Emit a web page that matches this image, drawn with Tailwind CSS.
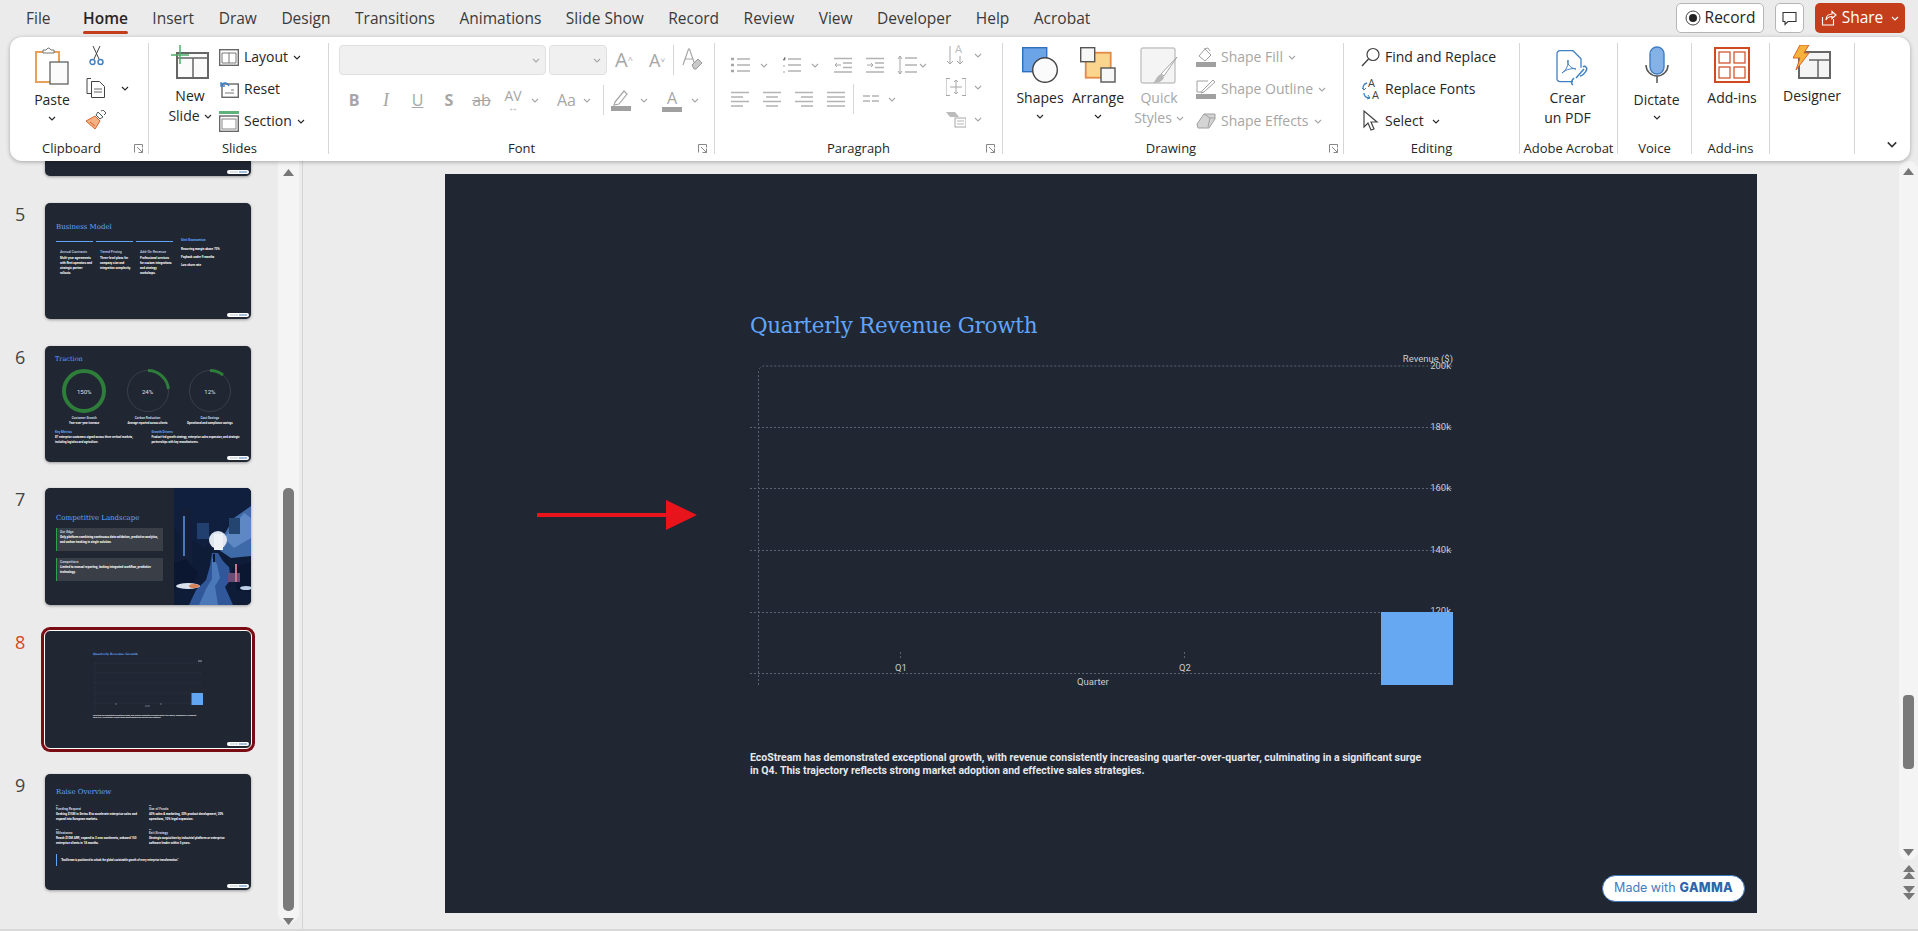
<!DOCTYPE html>
<html lang="en">
<head>
<meta charset="UTF-8">
<title>Quarterly Revenue Growth - PowerPoint</title>
<script src="https://cdn.jsdelivr.net/npm/@tailwindcss/browser@4"></script>
</head>
<body class="bg-[#ebebeb] font-['Open_Sans',sans-serif] text-[#262626]">
<svg class="hidden">
  <symbol id="chev" viewBox="0 0 8 5"><path d="M1 1l3 3 3-3" fill="none" stroke="currentColor" stroke-width="1.1"/></symbol>
  <symbol id="launch" viewBox="0 0 10 9"><path d="M.5 8.5v-8h8v3M.5.5M3 3l5.500 5.500M8.500 4.500v4h-4" fill="none" stroke="#888" stroke-width="1"/></symbol>
  <symbol id="aleft" viewBox="0 0 18 16"><path d="M0 1.500h18M0 6h12M0 10.500h18M0 15h12" stroke="#b3b3b3" stroke-width="1.500"/></symbol>
  <symbol id="acenter" viewBox="0 0 18 16"><path d="M0 1.500h18M3 6h12M0 10.500h18M3 15h12" stroke="#b3b3b3" stroke-width="1.500"/></symbol>
  <symbol id="aright" viewBox="0 0 18 16"><path d="M0 1.500h18M6 6h12M0 10.500h18M6 15h12" stroke="#b3b3b3" stroke-width="1.500"/></symbol>
  <symbol id="ajust" viewBox="0 0 18 16"><path d="M0 1.500h18M0 6h18M0 10.500h18M0 15h18" stroke="#b3b3b3" stroke-width="1.500"/></symbol>
  <symbol id="minibadge" viewBox="0 0 22 4"><rect width="22" height="4" rx="2" fill="#fff"/><rect x="12" y="1" width="8" height="2" fill="#a9c0dc"/><rect x="3" y="1.300" width="8" height="1.400" fill="#cfd6df"/></symbol>
</svg>

<div class="w-[1918px] h-[931px] overflow-hidden relative">

  <!-- tabs -->
  <header class="h-[37px] flex items-start">
    <nav class="flex pl-[26px] pt-[6px] gap-[24.500px] text-[15.500px] leading-[24px] text-[#3a3a3a]">
      <span>File</span>
      <span class="relative font-semibold text-[#262626] ml-[8px]">Home<span class="absolute left-0 right-0 top-[25px] h-[3px] rounded-sm bg-[#c43e1c]"></span></span>
      <span>Insert</span><span>Draw</span><span>Design</span><span>Transitions</span><span>Animations</span><span>Slide Show</span><span>Record</span><span>Review</span><span>View</span><span>Developer</span><span>Help</span><span>Acrobat</span>
    </nav>
    <div class="ml-auto flex items-center gap-[11px] pr-[13px] pt-[3px]">
      <button class="h-[30px] w-[88px] flex items-center justify-center gap-[4px] bg-white border border-[#b5b5b5] rounded-[5px] text-[15.500px]">
        <svg class="w-[16px] h-[16px]" viewBox="0 0 16 16"><circle cx="8" cy="8" r="7" fill="none" stroke="#444" stroke-width="1"/><circle cx="8" cy="8" r="4" fill="#222"/></svg>Record
      </button>
      <button class="h-[30px] w-[29px] flex items-center justify-center bg-white border border-[#b5b5b5] rounded-[5px]">
        <svg class="w-[15px] h-[15px]" viewBox="0 0 15 15"><path d="M1 1.500h13v9H6l-3 3v-3H1z" fill="none" stroke="#333" stroke-width="1.100"/></svg>
      </button>
      <button class="h-[30px] w-[90px] flex items-center justify-center gap-[5px] bg-[#c43e1c] rounded-[5px] text-white text-[15.500px]">
        <svg class="w-[16px] h-[16px]" viewBox="0 0 16 16"><path d="M1.500 7v8h11V9M5 10c0-4 3-6 6-6V1.500L15 5l-4 3.500V6.500C8.500 6.500 6 8 5 10z" fill="none" stroke="#fff" stroke-width="1.100"/></svg>Share
        <svg class="w-[8px] h-[5px] text-white ml-[3px]"><use href="#chev"/></svg>
      </button>
    </div>
  </header>

  <!-- ribbon -->
  <section class="relative z-10 ml-[10px] w-[1900px] h-[124px] bg-white rounded-xl shadow-[0_1px_4px_rgba(0,0,0,0.3)] pt-[6px] flex text-[14px] leading-[20px]">

    <!-- clipboard -->
    <div class="relative w-[139px] h-[111px] border-r border-[#d6d6d6] flex flex-col">
      <div class="flex h-[99px]">
        <div class="w-[52px] ml-[16px] flex flex-col items-center">
          <svg class="w-[34px] h-[38px] mt-[4px] shrink-0" viewBox="0 0 34 38"><rect x="1" y="5" width="23" height="30" fill="#fff" stroke="#e8a15a" stroke-width="2"/><path d="M8 5V3h3l2-2h1l2 2h3v3H8z" fill="#fff" stroke="#777"/><rect x="15" y="15" width="18" height="22" fill="#fbfbfb" stroke="#555" stroke-width="1.200"/></svg>
          <span class="mt-[5px]">Paste</span>
          <svg class="w-[8px] h-[5px] mt-[6px]"><use href="#chev"/></svg>
        </div>
        <div class="flex flex-col ml-[8px]">
          <svg class="w-[15px] h-[20px] ml-[3px] mt-[3px]" viewBox="0 0 15 20"><path d="M4 0l6 13M11 0L5 13" stroke="#444" fill="none"/><circle cx="3.500" cy="16" r="2.500" fill="none" stroke="#3f7fc4" stroke-width="1.400"/><circle cx="11.500" cy="16" r="2.500" fill="none" stroke="#3f7fc4" stroke-width="1.400"/></svg>
          <div class="flex items-center mt-[12px]">
            <svg class="w-[20px] h-[20px]" viewBox="0 0 20 20"><path d="M5 .500H1v15h4M5.500 3.500h8l5 5v11h-13z" fill="none" stroke="#444"/><path d="M8 11h8M8 14h8" stroke="#666"/></svg>
            <svg class="w-[8px] h-[5px] ml-[15px]"><use href="#chev"/></svg>
          </div>
          <svg class="w-[20px] h-[20px] mt-[12px]" viewBox="0 0 20 20"><path d="M12 2l5 5-3 2-4-4z" fill="#fff" stroke="#555"/><path d="M15 1l2-1 3 3-2 2" fill="none" stroke="#555"/><path d="M9 6l5 5-5 8-9-8z" fill="#f4b183" stroke="#d9622b"/><path d="M4 12l5 4" stroke="#d9622b"/></svg>
        </div>
      </div>
      <span class="text-[13px] leading-[12px] pl-[32px]">Clipboard</span>
      <svg class="absolute right-[4px] bottom-[1px] w-[10px] h-[9px]"><use href="#launch"/></svg>
    </div>

    <!-- slides -->
    <div class="w-[180px] h-[111px] border-r border-[#d6d6d6] flex flex-col">
      <div class="flex h-[99px]">
        <div class="w-[60px] ml-[6px] flex flex-col items-center">
          <svg class="w-[38px] h-[34px] mt-[2px] ml-[10px] shrink-0" viewBox="0 0 38 34"><rect x="6" y="8" width="31" height="25" fill="#fbfbfb" stroke="#666" stroke-width="2"/><path d="M6 13h31M22 13v20" stroke="#666" stroke-width="1.500"/><path d="M9 0v19M0 10h18" stroke="#4caf6a" stroke-width="1.500"/></svg>
          <span class="mt-[7px] ml-[10px]">New</span>
          <span class="ml-[10px] whitespace-nowrap flex items-center gap-[4px]">Slide<svg class="w-[8px] h-[5px]"><use href="#chev"/></svg></span>
        </div>
        <div class="ml-[4px] flex flex-col gap-[12px] mt-[4px]">
          <div class="flex items-center gap-[5px] h-[20px]">
            <svg class="w-[20px] h-[17px]" viewBox="0 0 20 17"><rect x=".7" y=".7" width="18.600" height="15.600" fill="#fff" stroke="#666" stroke-width="1.400"/><path d="M3 4h14M10 4v10M3 14h14M3 4v10M17 4v10" stroke="#777" fill="none"/></svg>
            Layout<svg class="w-[8px] h-[5px]"><use href="#chev"/></svg>
          </div>
          <div class="flex items-center gap-[5px] h-[20px]">
            <svg class="w-[20px] h-[17px]" viewBox="0 0 20 17"><rect x="3" y="3" width="16.300" height="13.300" fill="#fff" stroke="#666" stroke-width="1.400"/><path d="M6 12h9M12 9h3" stroke="#777"/><path d="M2 5c2-4 6-4 8 0M2 1v4h4" fill="none" stroke="#3f7fc4" stroke-width="1.400"/></svg>
            Reset
          </div>
          <div class="flex items-center gap-[5px] h-[20px]">
            <svg class="w-[20px] h-[21px]" viewBox="0 0 20 21"><rect width="20" height="3" fill="#5fb37a"/><rect x=".7" y="5" width="18.600" height="15.300" fill="#fff" stroke="#666" stroke-width="1.400"/><rect x="3" y="8" width="14" height="10" fill="none" stroke="#888"/></svg>
            Section<svg class="w-[8px] h-[5px]"><use href="#chev"/></svg>
          </div>
        </div>
      </div>
      <span class="text-[13px] leading-[12px] text-center pr-[-1px] pl-[2px]">Slides</span>
    </div>

    <!-- font -->
    <div class="relative w-[386px] h-[111px] border-r border-[#d6d6d6] flex flex-col text-[#a6a6a6]">
      <div class="h-[99px]">
        <div class="flex items-center pl-[10px] mt-[2px] h-[30px]">
          <div class="w-[207px] h-[30px] bg-[#f0f0f0] border border-[#e0e0e0] rounded-[4px] flex items-center justify-end pr-[5px]"><svg class="w-[8px] h-[5px]"><use href="#chev"/></svg></div>
          <div class="w-[58px] h-[30px] ml-[3px] bg-[#f0f0f0] border border-[#e0e0e0] rounded-[4px] flex items-center justify-end pr-[5px]"><svg class="w-[8px] h-[5px]"><use href="#chev"/></svg></div>
          <span class="ml-[8px] w-[34px] text-[20px] leading-[24px]">A<sup class="text-[9px]">^</sup></span>
          <span class="w-[24px] text-[18px] leading-[24px]">A<sup class="text-[8px]">˅</sup></span>
          <span class="w-px h-[30px] bg-[#d6d6d6]"></span>
          <svg class="ml-[7px] w-[21px] h-[24px]" viewBox="0 0 21 24"><path d="M2 17L7.500 1h1L14 17M4 11h8" fill="none" stroke="#a6a6a6" stroke-width="1.200"/><path d="M11 17l6-6 4 4-6 6h-2z" fill="#c8c8c8" stroke="#999"/></svg>
        </div>
        <div class="flex items-center pl-[9px] mt-[10px] h-[30px] text-[16px]">
          <span class="w-[32px] text-center font-bold">B</span>
          <span class="w-[32px] text-center italic font-['Liberation_Serif',serif] text-[18px]">I</span>
          <span class="w-[31px] text-center underline">U</span>
          <span class="w-[32px] text-center font-bold">S</span>
          <span class="w-[33px] text-center line-through">ab</span>
          <span class="w-[30px] text-center leading-[14px] text-[14px]">AV<br><span class="text-[10px] leading-[8px] block">↔</span></span>
          <svg class="w-[8px] h-[5px] ml-[3px]"><use href="#chev"/></svg>
          <span class="w-[29px] ml-[13px] text-center">Aa</span>
          <svg class="w-[8px] h-[5px] ml-[2px]"><use href="#chev"/></svg>
          <span class="w-px h-[30px] bg-[#d6d6d6] ml-[12px]"></span>
          <svg class="ml-[7px] w-[20px] h-[24px]" viewBox="0 0 20 24"><path d="M4 14L13 3l3 3-8 10-5 1z" fill="none" stroke="#a6a6a6" stroke-width="1.200"/><rect y="18" width="20" height="5" fill="#a0a0a0"/></svg>
          <svg class="w-[8px] h-[5px] ml-[9px]"><use href="#chev"/></svg>
          <span class="w-[20px] ml-[14px] text-center leading-[18px] border-b-[5px] border-[#a0a0a0]">A</span>
          <svg class="w-[8px] h-[5px] ml-[9px]"><use href="#chev"/></svg>
        </div>
      </div>
      <span class="text-[13px] leading-[12px] text-center text-[#262626]">Font</span>
      <svg class="absolute right-[6px] bottom-[1px] w-[10px] h-[9px]"><use href="#launch"/></svg>
    </div>

    <!-- paragraph -->
    <div class="relative w-[288px] h-[111px] border-r border-[#d6d6d6] flex flex-col text-[#a6a6a6]">
      <div class="flex h-[99px]">
        <div class="w-[225px] pl-[16px]">
          <div class="flex items-center h-[24px] mt-[10px]">
            <svg class="w-[19px] h-[16px]" viewBox="0 0 19 16"><path d="M0 2h3M0 8h3M0 14h3" stroke="#a6a6a6" stroke-width="2.500"/><path d="M6 2h13M6 8h13M6 14h13" stroke="#b3b3b3" stroke-width="1.500"/></svg>
            <svg class="w-[8px] h-[5px] ml-[10px]"><use href="#chev"/></svg>
            <svg class="w-[19px] h-[16px] ml-[14px]" viewBox="0 0 19 16"><path d="M1 3h2V0M1 9h2M1 15h2" stroke="#a6a6a6"/><path d="M6 2h13M6 8h13M6 14h13" stroke="#b3b3b3" stroke-width="1.500"/></svg>
            <svg class="w-[8px] h-[5px] ml-[10px]"><use href="#chev"/></svg>
            <svg class="w-[18px] h-[16px] ml-[15px]" viewBox="0 0 18 16"><path d="M0 1.500h18M9 6h9M9 10.500h9M0 15h18" stroke="#b3b3b3" stroke-width="1.500"/><path d="M7 8H1M3 6L1 8l2 2" fill="none" stroke="#a6a6a6"/></svg>
            <svg class="w-[18px] h-[16px] ml-[14px]" viewBox="0 0 18 16"><path d="M0 1.500h18M9 6h9M9 10.500h9M0 15h18" stroke="#b3b3b3" stroke-width="1.500"/><path d="M1 8h6M5 6l2 2-2 2" fill="none" stroke="#a6a6a6"/></svg>
            <svg class="w-[20px] h-[20px] ml-[13px]" viewBox="0 0 20 20"><path d="M8 3h12M8 10h12M8 17h12" stroke="#b3b3b3" stroke-width="1.500"/><path d="M3 1v18M1 4l2-3 2 3M1 16l2 3 2-3" fill="none" stroke="#a6a6a6"/></svg>
            <svg class="w-[8px] h-[5px] ml-[2px]"><use href="#chev"/></svg>
          </div>
          <div class="flex items-center h-[30px] mt-[7px]">
            <svg class="w-[18px] h-[16px]"><use href="#aleft"/></svg>
            <svg class="w-[18px] h-[16px] ml-[14px]"><use href="#acenter"/></svg>
            <svg class="w-[18px] h-[16px] ml-[14px]"><use href="#aright"/></svg>
            <svg class="w-[18px] h-[16px] ml-[14px]"><use href="#ajust"/></svg>
            <span class="w-px h-[30px] bg-[#d6d6d6] ml-[8px]"></span>
            <svg class="w-[16px] h-[8px] ml-[9px]" viewBox="0 0 16 8"><path d="M0 1h7M9 1h7M0 6h7M9 6h7" stroke="#b3b3b3" stroke-width="1.300"/></svg>
            <svg class="w-[8px] h-[5px] ml-[9px]"><use href="#chev"/></svg>
          </div>
        </div>
        <div class="ml-[6px] flex flex-col">
          <div class="flex items-center h-[24px] mt-[0px]">
            <svg class="w-[20px] h-[22px]" viewBox="0 0 20 22"><path d="M4 2v18M1 17l3 3 3-3M14 12v8M11 17l3 3 3-3" fill="none" stroke="#a6a6a6"/><text x="9" y="9" font-size="11" fill="#bbb" font-family="Open Sans">A</text></svg>
            <svg class="w-[8px] h-[5px] ml-[8px]"><use href="#chev"/></svg>
          </div>
          <div class="flex items-center h-[24px] mt-[8px]">
            <svg class="w-[20px] h-[20px]" viewBox="0 0 20 20"><path d="M0 1.500h4M0 1.500v17h4M16 1.500h4v17h-4M4 10h12M10 3v14M8 5l2-2 2 2M8 15l2 2 2-2" fill="none" stroke="#a6a6a6"/></svg>
            <svg class="w-[8px] h-[5px] ml-[8px]"><use href="#chev"/></svg>
          </div>
          <div class="flex items-center h-[24px] mt-[8px]">
            <svg class="w-[20px] h-[18px]" viewBox="0 0 20 18"><path d="M0 2h9l4 5H4z" fill="#bbb"/><rect x="9" y="8" width="11" height="9" fill="#fff" stroke="#a6a6a6"/><path d="M11 11h7M11 14h7" stroke="#b3b3b3"/></svg>
            <svg class="w-[8px] h-[5px] ml-[8px]"><use href="#chev"/></svg>
          </div>
        </div>
      </div>
      <span class="text-[13px] leading-[12px] text-center text-[#262626]">Paragraph</span>
      <svg class="absolute right-[6px] bottom-[1px] w-[10px] h-[9px]"><use href="#launch"/></svg>
    </div>

    <!-- drawing -->
    <div class="relative w-[341px] h-[111px] border-r border-[#d6d6d6] flex flex-col">
      <div class="flex h-[99px]">
        <div class="w-[58px] ml-[8px] flex flex-col items-center">
          <svg class="w-[36px] h-[36px] mt-[4px] shrink-0" viewBox="0 0 36 36"><rect x=".7" y=".7" width="24" height="24" fill="#6ba5e7" stroke="#2f6fbd" stroke-width="1.400"/><circle cx="23" cy="23" r="12.300" fill="#fbfbfb" stroke="#444" stroke-width="1.400"/></svg>
          <span class="mt-[5px]">Shapes</span>
          <svg class="w-[8px] h-[5px] mt-[6px]"><use href="#chev"/></svg>
        </div>
        <div class="w-[58px] flex flex-col items-center">
          <svg class="w-[36px] h-[36px] mt-[4px] shrink-0" viewBox="0 0 36 36"><rect x="5.700" y="5.700" width="25" height="25" fill="#fbd58e" stroke="#e38a45" stroke-width="1.800"/><rect x=".7" y=".7" width="14" height="14" fill="#f7f7f7" stroke="#555" stroke-width="1.400"/><rect x="21" y="21" width="14" height="14" fill="#f7f7f7" stroke="#555" stroke-width="1.400"/></svg>
          <span class="mt-[5px]">Arrange</span>
          <svg class="w-[8px] h-[5px] mt-[6px]"><use href="#chev"/></svg>
        </div>
        <div class="w-[64px] flex flex-col items-center text-[#a6a6a6]">
          <svg class="w-[38px] h-[38px] mt-[4px] shrink-0" viewBox="0 0 38 38"><rect x="1" y="1" width="34" height="35" rx="2" fill="#f4f4f4" stroke="#c4c4c4" stroke-width="1.400"/><path d="M37 10L24 29l-3-2z" fill="#fff" stroke="#a6a6a6"/><path d="M21 27l3 3c-1 5-7 6-11 6 3-2 3-7 8-9z" fill="#b8b8b8"/></svg>
          <span class="mt-[3px]">Quick</span>
          <span class="flex items-center gap-[4px]">Styles<svg class="w-[8px] h-[5px]"><use href="#chev"/></svg></span>
        </div>
        <div class="ml-[5px] flex flex-col gap-[12px] mt-[4px] text-[#a6a6a6]">
          <div class="flex items-center gap-[5px] h-[20px]">
            <svg class="w-[20px] h-[20px]" viewBox="0 0 20 20"><path d="M3 9l6-7 6 6-6 6z" fill="#fff" stroke="#a0a0a0"/><path d="M8 2l4-1 2 3" fill="none" stroke="#a0a0a0"/><rect y="15" width="20" height="5" fill="#a0a0a0"/></svg>
            Shape Fill<svg class="w-[8px] h-[5px]"><use href="#chev"/></svg>
          </div>
          <div class="flex items-center gap-[5px] h-[20px]">
            <svg class="w-[20px] h-[20px]" viewBox="0 0 20 20"><path d="M12 2H1v11h6" fill="none" stroke="#a0a0a0"/><path d="M6 12L17 1l2 2L8 13l-3 1z" fill="#fff" stroke="#a0a0a0"/><rect y="15" width="20" height="5" fill="#a0a0a0"/></svg>
            Shape Outline<svg class="w-[8px] h-[5px]"><use href="#chev"/></svg>
          </div>
          <div class="flex items-center gap-[5px] h-[20px]">
            <svg class="w-[20px] h-[20px]" viewBox="0 0 20 20"><path d="M1 13L8 3h11v5l-6 9H2z" fill="#d4d4d4" stroke="#a0a0a0"/><path d="M8 3l6 4-2 9" fill="none" stroke="#a0a0a0"/><path d="M14 7h5" stroke="#a0a0a0"/></svg>
            Shape Effects<svg class="w-[8px] h-[5px]"><use href="#chev"/></svg>
          </div>
        </div>
      </div>
      <span class="text-[13px] leading-[12px] text-center pr-[4px]">Drawing</span>
      <svg class="absolute right-[4px] bottom-[1px] w-[10px] h-[9px]"><use href="#launch"/></svg>
    </div>

    <!-- editing -->
    <div class="w-[176px] h-[111px] border-r border-[#d6d6d6] flex flex-col">
      <div class="h-[99px] pl-[17px] pt-[4px] flex flex-col gap-[12px]">
        <div class="flex items-center gap-[5px] h-[20px]">
          <svg class="w-[19px] h-[20px]" viewBox="0 0 19 20"><circle cx="12" cy="7.500" r="6" fill="#fff" stroke="#444" stroke-width="1.200"/><path d="M7.500 12L1 19" stroke="#444" stroke-width="1.400"/></svg>
          Find and Replace
        </div>
        <div class="flex items-center gap-[4px] h-[20px]">
          <svg class="w-[20px] h-[22px]" viewBox="0 0 20 22"><text x="7" y="9" font-size="11" fill="#444" font-family="Open Sans">A</text><text x="11" y="21" font-size="11" fill="#444" font-family="Open Sans">A</text><path d="M6 5C2 6 1 10 3 12M9 20c-4 0-6-2-6-5" fill="none" stroke="#3f7fc4" stroke-width="1.300"/><path d="M1 10l2 2 2-2M7 17l2 3-3 1" fill="none" stroke="#3f7fc4"/></svg>
          Replace Fonts
        </div>
        <div class="flex items-center gap-[5px] h-[20px]">
          <svg class="w-[19px] h-[22px]" viewBox="0 0 19 22"><path d="M3 1v16l4-4 3 7 3-1-3-7h6z" fill="#fff" stroke="#444" stroke-width="1.200"/></svg>
          Select<svg class="w-[8px] h-[5px] ml-[3px]"><use href="#chev"/></svg>
        </div>
      </div>
      <span class="text-[13px] leading-[12px] text-center">Editing</span>
    </div>

    <!-- acrobat -->
    <div class="w-[98px] h-[111px] border-r border-[#d6d6d6] flex flex-col">
      <div class="h-[99px] flex flex-col items-center pr-[2px]">
        <svg class="w-[32px] h-[36px] mt-[7px] ml-[8px] shrink-0" viewBox="0 0 32 36"><path d="M17 31H4a3 3 0 01-3-3V3a3 3 0 013-3h13l8 8v9" transform="translate(0 .7)" fill="none" stroke="#3f7fc4" stroke-width="1.300"/><path d="M6 23c4-2 7-9 6-13-2 5 5 9 8 9-3-1-10 0-14 4z" fill="none" stroke="#3f7fc4"/><path d="M20 28l8-9M17 35c-3-2-1-5 1-7M24 26c2 0 5-3 6-5 2-3-1-6-3-4" fill="none" stroke="#3f7fc4" stroke-width="1.500"/></svg>
        <span class="mt-[2px]">Crear</span>
        <span>un PDF</span>
      </div>
      <span class="text-[13px] leading-[12px] text-center whitespace-nowrap">Adobe Acrobat</span>
    </div>

    <!-- voice -->
    <div class="w-[74px] h-[111px] border-r border-[#d6d6d6] flex flex-col">
      <div class="h-[99px] flex flex-col items-center pl-[4px]">
        <svg class="w-[24px] h-[37px] mt-[3px] shrink-0" viewBox="0 0 24 37"><rect x="5" y="1" width="14" height="27" rx="7" fill="#85b2e6" stroke="#3f7fc4" stroke-width="1.400"/><path d="M1 19a11 11 0 0022 0M12 30v7" fill="none" stroke="#555" stroke-width="1.500"/></svg>
        <span class="mt-[7px]">Dictate</span>
        <svg class="w-[8px] h-[5px] mt-[5px]"><use href="#chev"/></svg>
      </div>
      <span class="text-[13px] leading-[12px] text-center">Voice</span>
    </div>

    <!-- add-ins -->
    <div class="w-[78px] h-[111px] border-r border-[#d6d6d6] flex flex-col">
      <div class="h-[99px] flex flex-col items-center pl-[3px]">
        <svg class="w-[36px] h-[36px] mt-[4px] shrink-0" viewBox="0 0 36 36"><rect x="1" y="1" width="34" height="34" fill="none" stroke="#d0491f" stroke-width="2"/><rect x="5" y="5" width="11" height="11" fill="none" stroke="#d0491f" stroke-width="1.200"/><rect x="20" y="5" width="11" height="11" fill="none" stroke="#d0491f" stroke-width="1.200"/><rect x="5" y="20" width="11" height="11" fill="none" stroke="#d0491f" stroke-width="1.200"/><rect x="20" y="20" width="11" height="11" fill="none" stroke="#d0491f" stroke-width="1.200"/></svg>
        <span class="mt-[5px]">Add-ins</span>
      </div>
      <span class="text-[13px] leading-[12px] text-center">Add-ins</span>
    </div>

    <!-- designer -->
    <div class="w-[85px] h-[111px] border-r border-[#d6d6d6] flex flex-col items-center">
      <svg class="w-[38px] h-[34px] mt-[2px] shrink-0" viewBox="0 0 38 34"><rect x="6" y="7" width="31" height="26" fill="#f4f4f4" stroke="#666" stroke-width="2"/><path d="M16 15h21M25 15v18" stroke="#666" stroke-width="1.500"/><path d="M7 0h9l-5 8h5L3 25l4-12H0z" fill="#f7b23b" stroke="#d9622b"/></svg>
      <span class="mt-[7px]">Designer</span>
    </div>

    <svg class="absolute left-[1876px] top-[104px] w-[12px] h-[7px] text-[#333]"><use href="#chev"/></svg>
  </section>

  <!-- workspace -->
  <div class="flex h-[770px]">
    <!-- thumbnails -->
    <aside class="w-[278px] h-full overflow-hidden font-['Roboto',sans-serif]">
      <div class="ml-[45px] w-[206px] h-[15px] bg-[#202632] rounded-b-[5px] shadow-[0_1px_3px_rgba(0,0,0,0.35)] flex justify-end items-end pr-[2px] pb-[2px]"><svg class="w-[22px] h-[4px]"><use href="#minibadge"/></svg></div>

      <!-- 5 -->
      <div class="flex mt-[27px]">
        <span class="w-[45px] pl-[15px] text-[18px] leading-[22px] text-[#444] font-['Open_Sans',sans-serif]">5</span>
        <div class="relative w-[206px] h-[116px] bg-[#202632] rounded-[5px] shadow-[0_1px_3px_rgba(0,0,0,0.35)] pl-[11px] pt-[19px] text-white text-[3px] leading-[5px] font-bold">
          <p class="font-['DejaVu_Serif',serif] font-normal text-[7px] leading-[10px] text-[#60a5fa]">Business Model</p>
          <div class="flex mt-[9px]">
            <div class="w-[37px] border-t border-[#60a5fa] mr-[3px] pt-[8px] pl-[4px]"><p class="text-[3.500px] text-[#c7d4e5] font-medium mb-[1px]">Annual Contracts</p>Multi-year agreements with fleet operators and strategic partner rollouts.</div>
            <div class="w-[37px] border-t border-[#60a5fa] mr-[3px] pt-[8px] pl-[4px]"><p class="text-[3.500px] text-[#c7d4e5] font-medium mb-[1px]">Tiered Pricing</p>Three-level plans for company size and integration complexity.</div>
            <div class="w-[37px] border-t border-[#60a5fa] mr-[8px] pt-[8px] pl-[4px]"><p class="text-[3.500px] text-[#c7d4e5] font-medium mb-[1px]">Add-On Revenue</p>Professional services for custom integrations and strategy workshops.</div>
            <div class="-mt-[5px] leading-[8px]"><p class="text-[3.500px] text-[#60a5fa] mb-[1px]">Unit Economics</p>Recurring margin above 70%<br>Payback under 9 months<br>Low churn rate</div>
          </div>
          <svg class="absolute right-[2px] bottom-[2px] w-[22px] h-[4px]"><use href="#minibadge"/></svg>
        </div>
      </div>

      <!-- 6 -->
      <div class="flex mt-[27px]">
        <span class="w-[45px] pl-[15px] text-[18px] leading-[22px] text-[#444] font-['Open_Sans',sans-serif]">6</span>
        <div class="relative w-[206px] h-[116px] bg-[#202632] rounded-[5px] shadow-[0_1px_3px_rgba(0,0,0,0.35)] px-[10px] pt-[8px] text-white text-[2.800px] leading-[5px] font-bold">
          <p class="font-['DejaVu_Serif',serif] font-normal text-[6.500px] leading-[10px] text-[#60a5fa]">Traction</p>
          <div class="flex mt-[5px] text-center">
            <div class="w-[60px] ml-[0px] flex flex-col items-center">
              <div class="relative w-[44px] h-[44px] flex items-center justify-center"><svg class="absolute inset-0" viewBox="0 0 44 44"><circle cx="22" cy="22" r="20" fill="none" stroke="#2e7d3a" stroke-width="4"/></svg><span class="text-[6px] text-[#d7e2f0] font-normal">150%</span></div>
              <p class="text-[3.200px] text-[#c7d4e5] mt-[3px]">Customer Growth</p><p>Year-over-year increase</p>
            </div>
            <div class="w-[64px] flex flex-col items-center ml-[3px]">
              <div class="relative w-[44px] h-[44px] flex items-center justify-center"><svg class="absolute inset-0" viewBox="0 0 44 44"><circle cx="22" cy="22" r="20.500" fill="none" stroke="#3a3f4a" stroke-width="1"/><path d="M22 1.500A20.500 20.500 0 0142.400 20" fill="none" stroke="#2e7d3a" stroke-width="3"/></svg><span class="text-[6px] text-[#d7e2f0] font-normal">24%</span></div>
              <p class="text-[3.200px] text-[#c7d4e5] mt-[3px]">Carbon Reduction</p><p>Average reported across clients</p>
            </div>
            <div class="w-[64px] flex flex-col items-center">
              <div class="relative w-[44px] h-[44px] flex items-center justify-center"><svg class="absolute inset-0" viewBox="0 0 44 44"><circle cx="22" cy="22" r="20.500" fill="none" stroke="#3a3f4a" stroke-width="1"/><path d="M22 1.500A20.500 20.500 0 0135 6" fill="none" stroke="#2e7d3a" stroke-width="3"/></svg><span class="text-[6px] text-[#d7e2f0] font-normal">12%</span></div>
              <p class="text-[3.200px] text-[#c7d4e5] mt-[3px]">Cost Savings</p><p>Operational and compliance savings</p>
            </div>
          </div>
          <div class="flex mt-[4px] gap-[7px]">
            <div class="w-[90px]"><p class="text-[3.200px] text-[#60a5fa]">Key Metrics</p>87 enterprise customers signed across three vertical markets, including logistics and agriculture.</div>
            <div class="w-[90px]"><p class="text-[3.200px] text-[#60a5fa]">Growth Drivers</p>Product-led growth strategy, enterprise sales expansion, and strategic partnerships with key manufacturers.</div>
          </div>
          <svg class="absolute right-[2px] bottom-[2px] w-[22px] h-[4px]"><use href="#minibadge"/></svg>
        </div>
      </div>

      <!-- 7 -->
      <div class="flex mt-[26px]">
        <span class="w-[45px] pl-[15px] text-[18px] leading-[22px] text-[#444] font-['Open_Sans',sans-serif]">7</span>
        <div class="relative w-[206px] h-[117px] bg-[#202632] rounded-[5px] overflow-hidden shadow-[0_1px_3px_rgba(0,0,0,0.35)] pl-[11px] pt-[25px] text-white text-[3px] leading-[5px] font-bold flex">
          <div class="w-[107px]">
            <p class="font-['DejaVu_Serif',serif] font-normal text-[7px] leading-[10px] text-[#60a5fa] whitespace-nowrap">Competitive Landscape</p>
            <div class="h-[23px] mt-[5px] bg-[#3a3f47] border-l border-[#2fa14a] px-[3px] pt-[2px]"><p class="text-[3.300px] text-[#c7cfd9] mb-[0px]">Our Edge</p>Only platform combining continuous data validation, predictive analytics, and carbon tracking in single solution.</div>
            <div class="h-[23px] mt-[7px] bg-[#3a3f47] border-l border-[#2fa14a] px-[3px] pt-[2px]"><p class="text-[3.300px] text-[#c7cfd9]">Competitors</p>Limited to manual reporting, lacking integrated workflow, predictive technology.</div>
          </div>
          <!-- city artwork -->
          <svg class="absolute right-0 top-0 w-[77px] h-[117px]" viewBox="0 0 77 117" preserveAspectRatio="none">
            <rect width="77" height="117" fill="#0e1c38"/>
            <path d="M0 0h77v40L55 52 45 60 40 50 30 60 0 40z" fill="#101f3e"/>
            <path d="M42 60L60 30l17-12v50l-20 2z" fill="#3f6aa8"/>
            <path d="M50 50L70 25l7 5v20L60 60z" fill="#5d88c4"/>
            <path d="M38 65h6l5 8 6 6 2 12-6 8 8 18H15l7-15 10-10 4-14z" fill="#2f5799"/>
            <path d="M38 70l5 6 3 14-5 8 3 19H25l7-16 6-10z" fill="#4a78b8"/>
            <rect x="6" y="20" width="12" height="80" fill="#131f38"/>
            <rect x="9" y="28" width="2" height="40" fill="#4a78b8"/>
            <rect x="23" y="35" width="12" height="16" fill="#21406f"/>
            <rect x="55" y="30" width="11" height="16" fill="#24456f"/>
            <circle cx="44" cy="52" r="9" fill="#dfe6f0"/>
            <rect x="40" y="46" width="9" height="16" fill="#eef2f7"/>
            <path d="M0 75l12-4 12 14-6 14-18 2z" fill="#0b1730"/>
            <path d="M58 80l19-6v30l-14-2z" fill="#0b1730"/>
            <rect x="54" y="85" width="12" height="9" fill="#6b4c75"/>
            <rect x="61" y="76" width="2" height="18" fill="#c9748a"/>
            <ellipse cx="14" cy="98" rx="12" ry="3" fill="#d9e1ec"/>
            <ellipse cx="20" cy="98" rx="5" ry="2" fill="#d9825a"/>
            <ellipse cx="72" cy="100" rx="6" ry="2" fill="#bcd0e8"/>
            <rect x="39" y="66" width="2" height="8" fill="#0b1730"/>
          </svg>
        </div>
      </div>

      <!-- 8, selected -->
      <div class="flex mt-[26px]">
        <span class="w-[45px] pl-[15px] text-[18px] leading-[22px] text-[#d24726] font-['Open_Sans',sans-serif]">8</span>
        <div class="relative w-[206px] h-[117px] bg-[#202632] rounded-[5px] outline outline-[1px] outline-white shadow-[0_0_0_4px_#7a0c14] pl-[48px] pt-[21px]">
          <p class="font-['DejaVu_Serif',serif] text-[3px] leading-[5px] font-bold text-[#60a5fa]">Quarterly Revenue Growth</p>
          <svg class="w-[110px] h-[54px] mt-[1px] -ml-[0px]" viewBox="0 0 110 54"><path d="M1 5h108M1 15h108M1 25h108M1 35h108M1 45h108M2 5v50" stroke="#384150" stroke-width=".5" stroke-dasharray="1 1"/><rect x="98.500" y="35" width="11.500" height="12" fill="#62a6f2"/><path d="M105 3h4" stroke="#9aa3af"/><path d="M52 48h5" stroke="#6b7280"/><path d="M22 46h2M67 46h2" stroke="#6b7280"/></svg>
          <div class="mt-[2px] text-white text-[1.700px] leading-[2px] font-bold w-[106px]">EcoStream has demonstrated exceptional growth, with revenue consistently increasing quarter-over-quarter, culminating in a significant surge in Q4. This trajectory reflects strong market adoption and effective sales strategies.</div>
          <svg class="absolute right-[2px] bottom-[2px] w-[22px] h-[4px]"><use href="#minibadge"/></svg>
        </div>
      </div>

      <!-- 9 -->
      <div class="flex mt-[26px]">
        <span class="w-[45px] pl-[15px] text-[18px] leading-[22px] text-[#444] font-['Open_Sans',sans-serif]">9</span>
        <div class="relative w-[206px] h-[116px] bg-[#202632] rounded-[5px] shadow-[0_1px_3px_rgba(0,0,0,0.35)] pl-[11px] pt-[13px] text-white text-[3px] leading-[5px] font-bold">
          <p class="font-['DejaVu_Serif',serif] font-normal text-[7px] leading-[10px] text-[#60a5fa]">Raise Overview</p>
          <div class="grid grid-cols-[93px_87px] mt-[6px] gap-y-[5px]">
            <div class="pr-[3px]"><p class="text-[2px] leading-[4px]">01</p><p class="text-[3.300px] text-[#c7d4e5]">Funding Request</p>Seeking $15M in Series B to accelerate enterprise sales and expand into European markets.</div>
            <div><p class="text-[2px] leading-[4px]">02</p><p class="text-[3.300px] text-[#c7d4e5]">Use of Funds</p>40% sales &amp; marketing, 30% product development, 20% operations, 10% legal expansion.</div>
            <div class="pr-[3px]"><p class="text-[2px] leading-[4px]">03</p><p class="text-[3.300px] text-[#c7d4e5]">Milestones</p>Reach $10M ARR, expand to 3 new continents, onboard 150 enterprise clients in 18 months.</div>
            <div><p class="text-[2px] leading-[4px]">04</p><p class="text-[3.300px] text-[#c7d4e5]">Exit Strategy</p>Strategic acquisition by industrial platform or enterprise software leader within 5 years.</div>
          </div>
          <div class="mt-[8px] w-[160px] border-l border-[#60a5fa] pl-[4px] py-[3.500px] text-[2.600px] leading-[5px] whitespace-nowrap">"EcoStream is positioned to unlock the global sustainable growth of every enterprise transformation."</div>
          <svg class="absolute right-[2px] bottom-[2px] w-[22px] h-[4px]"><use href="#minibadge"/></svg>
        </div>
      </div>
    </aside>

    <!-- left scrollbar -->
    <div class="relative w-[21px] h-[762px] bg-[#f4f4f4] rounded-b-[10px] flex flex-col items-center text-[#777]">
      <svg class="w-[11px] h-[7px] mt-[8px] -ml-[1px] shrink-0" viewBox="0 0 11 7"><path d="M5.500 0L11 7H0z" fill="#777"/></svg>
      <div class="w-[11px] h-[423px] mt-[312px] -ml-[1px] bg-[#7a7a7a] rounded-[5px] shrink-0"></div>
      <svg class="w-[11px] h-[7px] mt-[7px] -ml-[1px] shrink-0" viewBox="0 0 11 7"><path d="M5.500 7L11 0H0z" fill="#777"/></svg>
    </div>
    <div class="w-[1px] h-full ml-[3px] bg-[#d4d4d4]"></div>

    <!-- main slide -->
    <main class="relative flex-1 bg-[#ececec] font-['Roboto',sans-serif]">
      <div class="relative ml-[142px] mt-[13px] w-[1312px] h-[739px] bg-[#202632] pl-[305px]">
        <h1 class="pt-[137px] font-['DejaVu_Serif',serif] text-[21.500px] leading-[30px] tracking-[-0.3px] text-[#60a5fa] whitespace-nowrap">Quarterly Revenue Growth</h1>

        <!-- chart -->
        <div class="relative w-[703px] h-[340px] mt-[9px] text-[9.500px] leading-[12px] text-[#c9cdd3]">
          <svg class="absolute inset-0" width="703" height="340" viewBox="0 0 703 340">
            <g fill="none" stroke="#5b6472" stroke-width="1" stroke-dasharray="2 2">
              <path d="M8.500 335V22a6 6 0 016-6H703"/>
              <path d="M0 77.500h703M0 138.500h703M0 200.500h703M0 262.500h703M0 323.500h703"/>
              <path d="M150.500 302v7M434.500 302v7"/>
            </g>
          </svg>
          <span class="absolute right-0 top-[3px]">Revenue ($)</span>
          <span class="absolute right-[2px] top-[10px]">200k</span>
          <span class="absolute right-[2px] top-[71px]">180k</span>
          <span class="absolute right-[2px] top-[132px]">160k</span>
          <span class="absolute right-[2px] top-[194px]">140k</span>
          <span class="absolute right-[2px] top-[255px]">120k</span>
          <span class="absolute left-[145px] top-[312px]">Q1</span>
          <span class="absolute left-[429px] top-[312px]">Q2</span>
          <span class="absolute left-[327px] top-[326px]">Quarter</span>
          <div class="absolute left-[631px] top-[262px] w-[72px] h-[73px] bg-[#66a8f2]"></div>
        </div>

        <p class="mt-[61px] w-[680px] text-[10.500px] leading-[13.300px] font-bold text-[#e5e7eb]">EcoStream has demonstrated exceptional growth, with revenue consistently increasing quarter-over-quarter, culminating in a significant surge in Q4. This trajectory reflects strong market adoption and effective sales strategies.</p>

        <!-- arrow on top of the slide -->
        <svg class="absolute left-[92px] top-[325px] w-[160px] h-[32px]" viewBox="0 0 160 32"><path d="M0 14h129V1l31 15-31 15V18H0z" fill="#e8141c"/></svg>

        <div class="absolute right-[12px] bottom-[11px] w-[143px] h-[27px] bg-white border border-[#3e78bd] rounded-full flex items-center justify-center gap-[4px] text-[12.500px] text-[#3f7cc0] font-['Inter',sans-serif]">Made with <span class="font-extrabold text-[#2c65ab] tracking-[0.3px]">GAMMA</span></div>
      </div>

      <!-- right scrollbar -->
      <div class="absolute left-[1596px] top-0 w-[19px] h-[699px] bg-[#f4f4f4] rounded-[9px] flex flex-col items-center">
        <svg class="w-[11px] h-[7px] mt-[7px] shrink-0" viewBox="0 0 11 7"><path d="M5.500 0L11 7H0z" fill="#777"/></svg>
        <div class="w-[11px] h-[74px] mt-[520px] bg-[#7a7a7a] rounded-[4px] shrink-0"></div>
        <svg class="w-[11px] h-[7px] mt-[80px] shrink-0" viewBox="0 0 11 7"><path d="M5.500 7L11 0H0z" fill="#777"/></svg>
      </div>
      <div class="absolute left-[1600px] top-[704px] flex flex-col gap-[5px]">
        <svg class="w-[12px] h-[15px]" viewBox="0 0 12 15"><path d="M6 0l6 7H0zM6 7l6 7H0z" fill="#777"/></svg>
        <svg class="w-[12px] h-[15px]" viewBox="0 0 12 15"><path d="M6 15L0 8h12zM6 8L0 1h12z" fill="#777"/></svg>
      </div>
    </main>
  </div>
  <div class="absolute left-0 right-0 bottom-0 h-[2px] bg-[#d8d8d8]"></div>
</div>
</body>
</html>
